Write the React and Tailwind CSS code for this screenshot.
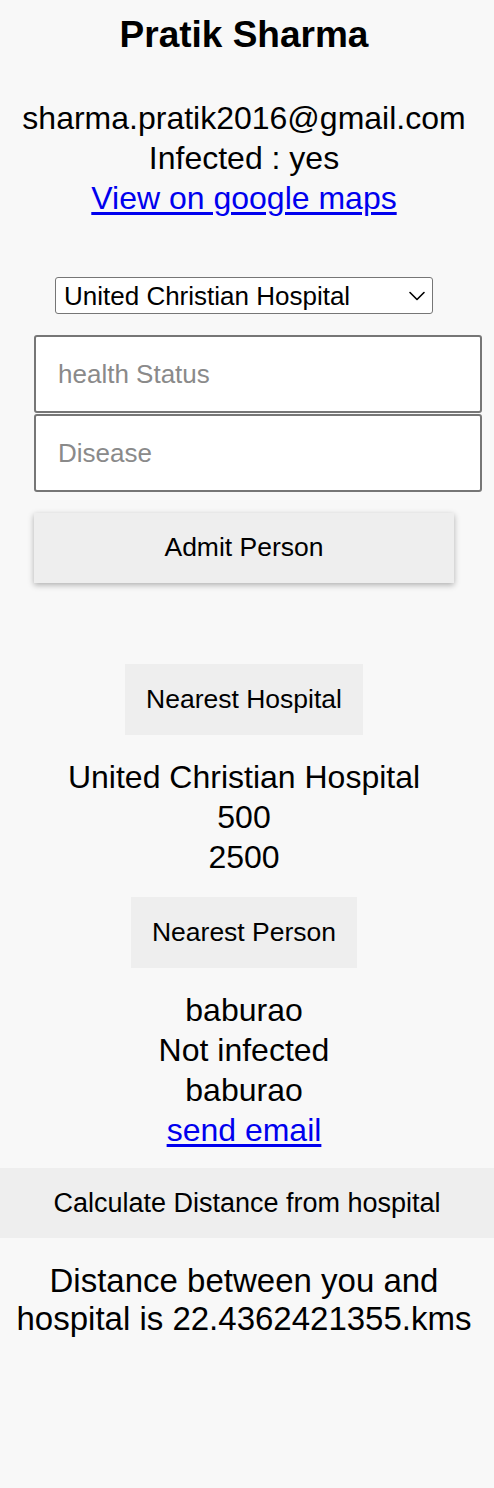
import { ChevronDown } from 'lucide-react'

/**
 * Person detail page
 * profile info, admit form, nearest hospital / person lookups
 */
export default function App() {
  return (
    <div className="min-h-[1488px] bg-[#f8f8f8] text-black font-['Liberation_Sans',Arial,sans-serif] text-center">
      <div className="w-[488px]">
        <h1 className="pt-[13px] text-[37px] leading-[44px] font-bold">Pratik Sharma</h1>

        <div className="mt-[41px] text-[32px] leading-[40px]">
          <p>sharma.pratik2016@gmail.com</p>
          <p>Infected : yes</p>
          <a href="#" className="text-[#0000ee] underline underline-offset-[3px]">View on google maps</a>
        </div>

        <div className="mt-[59px] flex justify-center">
          <div className="relative w-[378px] h-[37px] bg-white border border-[#767676] rounded-[3px] text-left">
            <span className="absolute left-[8px] top-[3px] text-[26px] leading-[30px]">United Christian Hospital</span>
            <ChevronDown className="absolute left-[347px] top-[4px] w-[28px] h-[28px]" strokeWidth={1.4} />
          </div>
        </div>

        <div className="mt-[21px] ml-[34px] w-[448px] flex flex-col gap-[1px]">
          <input
            placeholder="health Status"
            className="w-full h-[78px] px-[22px] bg-white border-2 border-[#767676] rounded-[3px] text-[26px] placeholder:text-[#8a8a8a] outline-none"
          />
          <input
            placeholder="Disease"
            className="w-full h-[78px] px-[22px] bg-white border-2 border-[#767676] rounded-[3px] text-[26px] placeholder:text-[#8a8a8a] outline-none"
          />
        </div>

        <div className="mt-[21px] flex justify-center">
          <button className="w-[420px] h-[70px] bg-[#eeeeee] text-[26.5px] shadow-[0_2px_6px_rgba(0,0,0,0.3)]">
            Admit Person
          </button>
        </div>

        <div className="mt-[81px] flex justify-center">
          <button className="w-[238px] h-[71px] bg-[#eeeeee] text-[26.5px]">Nearest Hospital</button>
        </div>

        <div className="mt-[22px] text-[32px] leading-[40px]">
          <p>United Christian Hospital</p>
          <p>500</p>
          <p>2500</p>
        </div>

        <div className="mt-[20px] flex justify-center">
          <button className="w-[226px] h-[71px] bg-[#eeeeee] text-[26.5px]">Nearest Person</button>
        </div>

        <div className="mt-[22px] text-[32px] leading-[40px]">
          <p>baburao</p>
          <p>Not infected</p>
          <p>baburao</p>
          <a href="#" className="text-[#0000ee] underline underline-offset-[3px]">send email</a>
        </div>
      </div>

      <button className="mt-[18px] w-full h-[70px] bg-[#eeeeee] text-[27px]">
        Calculate Distance from hospital
      </button>

      <p className="mt-[24px] w-[488px] px-[12px] text-[33px] leading-[38px]">
        Distance between you and hospital is 22.4362421355.kms
      </p>
    </div>
  )
}
